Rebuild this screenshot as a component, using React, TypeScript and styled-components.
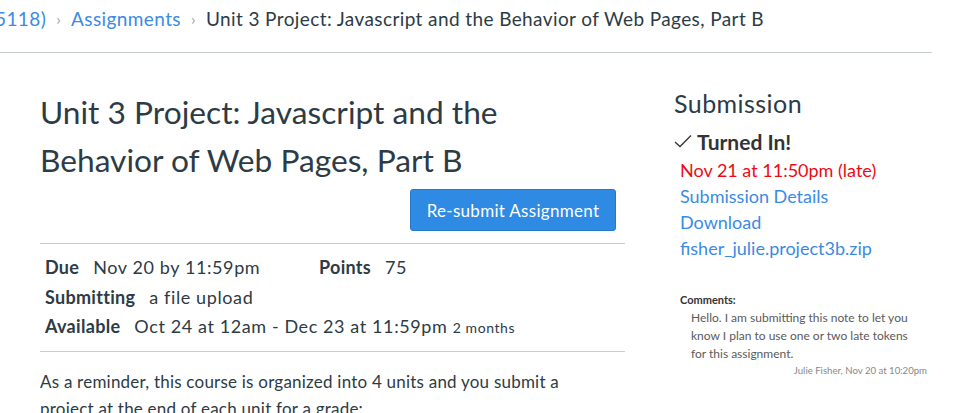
import React from "react";
import styled, { createGlobalStyle } from "styled-components";

const Global = createGlobalStyle`
  html, body { margin: 0; padding: 0; background: #fff; }
  body { font-family: Lato, "Open Sans", "Liberation Sans", sans-serif; color: #2d3b45; overflow: hidden; width: 954px; height: 413px; }
`;

const Page = styled.div`
  width: 954px;
  height: 413px;
  overflow: hidden;
`;

const Header = styled.nav`
  width: 932px;
  height: 53px;
  box-sizing: border-box;
  border-bottom: 1px solid #c7cdd1;
  display: flex;
  align-items: flex-start;
  padding-top: 6px;
  font-size: 19px;
  letter-spacing: 0.4px;
  line-height: 26px;
  white-space: nowrap;
`;

const Crumb = styled.a<{ $current?: boolean; $shift?: number }>`
  color: ${(p) => (p.$current ? "#2d3b45" : "#3b8be3")};
  text-decoration: none;
  margin-left: ${(p) => p.$shift ?? 0}px;
`;

const Sep = styled.span`
  color: #9aa3aa;
  font-size: 16px;
  margin: 0 10px 0 10px;
`;

const Main = styled.div`
  display: flex;
  padding-left: 40px;
`;

const Left = styled.div`
  width: 585px;
  padding-top: 35px;
`;

const Title = styled.h1`
  margin: 0;
  font-size: 31.7px;
  font-weight: 400;
  line-height: 48px;
  color: #2d3b45;
`;

const ButtonRow = styled.div`
  display: flex;
  justify-content: flex-end;
  padding-right: 9px;
  margin-top: 5px;
`;

const Button = styled.button`
  height: 42px;
  width: 206px;
  box-sizing: border-box;
  background: #2e8ae2;
  border: 1px solid #2678c8;
  border-radius: 3px;
  color: #fff;
  font-family: Lato, "Open Sans", sans-serif;
  font-size: 17px;
  letter-spacing: 0.3px;
  padding: 0 10px;
`;

const Details = styled.div`
  margin-top: 12px;
  border-top: 1px solid #c7cdd1;
  border-bottom: 1px solid #c7cdd1;
  padding: 9px 5px 8px 5px;
  font-size: 18px;
  letter-spacing: 0.6px;
  line-height: 29.5px;
`;

const DetailRow = styled.div`
  display: flex;
  white-space: nowrap;
`;

const Field = styled.span<{ $w?: number }>`
  display: inline-block;
  ${(p) => (p.$w ? `width: ${p.$w}px;` : "")}
`;

const Label = styled.b`
  font-weight: 700;
  letter-spacing: 0.3px;
  margin-right: 14px;
`;

const Small = styled.span`
  font-size: 14px;
  letter-spacing: 0.6px;
`;

const Para = styled.p`
  margin: 16px 0 0 0;
  font-size: 17px;
  letter-spacing: 0.22px;
  line-height: 27px;
`;

const Right = styled.aside`
  margin-left: 49px;
  width: 258px;
  padding-top: 35px;
`;

const SideTitle = styled.h2`
  margin: 0;
  font-size: 25px;
  letter-spacing: 0.45px;
  font-weight: 400;
  line-height: 30px;
  color: #2d3b45;
`;

const Turned = styled.div`
  display: flex;
  align-items: center;
  margin-top: 11px;
  font-size: 21px;
  font-weight: 700;
  line-height: 26px;
  color: #333;
`;

const Check = styled.svg`
  width: 18px;
  height: 14px;
  margin: -2px 5px 0 0;
`;

const Info = styled.div`
  padding-left: 6px;
  margin-top: 2px;
  font-size: 18px;
  line-height: 26px;
`;

const Late = styled.div`
  color: #ee0a12;
`;

const Link = styled.a`
  display: block;
  color: #3b8be3;
  text-decoration: none;
`;

const Comments = styled.div`
  margin-top: 32px;
  padding-left: 6px;
`;

const CommentHead = styled.div`
  font-size: 11px;
  font-weight: 700;
  line-height: 14px;
  color: #333;
`;

const CommentBody = styled.div`
  padding-left: 11px;
  margin-top: 2px;
  font-size: 12px;
  line-height: 18px;
  color: #5a5a5a;
  width: 224px;
`;

const Signature = styled.div`
  text-align: right;
  font-size: 9.6px;
  line-height: 14px;
  color: #888;
  margin-top: 1px;
  width: 247px;
`;

export default function App() {
  return (
    <Page>
      <Global />
      <Header>
        <Crumb href="#" $shift={-5}>5118)</Crumb>
        <Sep>›</Sep>
        <Crumb href="#">Assignments</Crumb>
        <Sep>›</Sep>
        <Crumb $current>Unit 3 Project: Javascript and the Behavior of Web Pages, Part B</Crumb>
      </Header>
      <Main>
        <Left>
          <Title>
            Unit 3 Project: Javascript and the
            <br />
            Behavior of Web Pages, Part B
          </Title>
          <ButtonRow>
            <Button>Re-submit Assignment</Button>
          </ButtonRow>
          <Details>
            <DetailRow>
              <Field $w={274}>
                <Label>Due</Label>Nov 20 by 11:59pm
              </Field>
              <Field>
                <Label>Points</Label>75
              </Field>
            </DetailRow>
            <DetailRow>
              <Field>
                <Label>Submitting</Label>a file upload
              </Field>
            </DetailRow>
            <DetailRow>
              <Field>
                <Label>Available</Label>Oct 24 at 12am - Dec 23 at 11:59pm <Small>2 months</Small>
              </Field>
            </DetailRow>
          </Details>
          <Para>
            As a reminder, this course is organized into 4 units and you submit a
            <br />
            project at the end of each unit for a grade:
          </Para>
        </Left>
        <Right>
          <SideTitle>Submission</SideTitle>
          <Turned>
            <Check viewBox="0 0 18 14">
              <path d="M1 8 L6 12.5 L17 1.5" fill="none" stroke="#333" strokeWidth="1.3" />
            </Check>
            Turned In!
          </Turned>
          <Info>
            <Late>Nov 21 at 11:50pm (late)</Late>
            <Link href="#">Submission Details</Link>
            <Link href="#">Download</Link>
            <Link href="#">fisher_julie.project3b.zip</Link>
          </Info>
          <Comments>
            <CommentHead>Comments:</CommentHead>
            <CommentBody>
              Hello. I am submitting this note to let you know I plan to use one or two late tokens for this assignment.
            </CommentBody>
            <Signature>Julie Fisher, Nov 20 at 10:20pm</Signature>
          </Comments>
        </Right>
      </Main>
    </Page>
  );
}
